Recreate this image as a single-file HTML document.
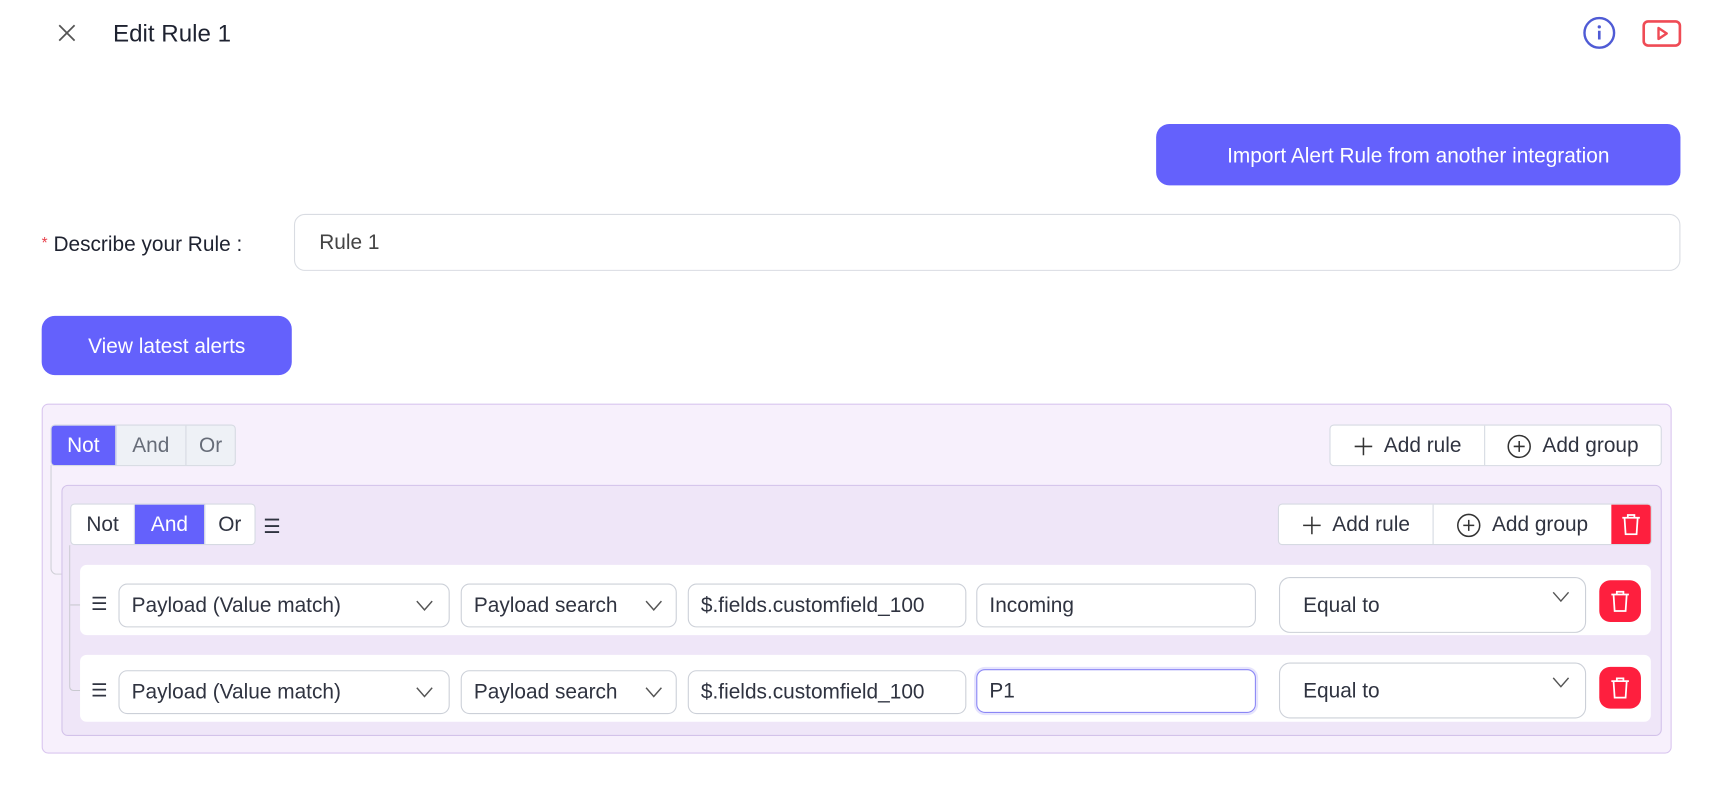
<!DOCTYPE html>
<html><head><meta charset="utf-8"><style>
html,body{margin:0;padding:0;background:#fff;width:1720px;height:786px;overflow:hidden}
#w{position:absolute;left:0;top:0;width:1568px;height:717px;transform:scale(1.0969);transform-origin:0 0;font-family:"Liberation Sans",sans-serif;color:#2f3340}
.a{position:absolute;box-sizing:border-box}
.btn{background:#6461fc;color:#fff;border-radius:12px;display:flex;align-items:center;justify-content:center;font-size:19px;padding-top:3px}
.seg{display:flex;border:1px solid #d6dae2;border-radius:4px;overflow:hidden;font-size:19px}
.seg div{display:flex;align-items:center;justify-content:center;border-right:1px solid #d6dae2;padding-top:2px}
.seg div:last-child{border-right:none}
.on{background:#6461fc;color:#fff}
.box{border:1px solid #ccd0d8;border-radius:8px;background:#fff;display:flex;align-items:center;font-size:19px;padding-left:11px;padding-top:2px}
.row{background:#fff;border-radius:6px}
.del{background:#fe1f3e;display:flex;align-items:center;justify-content:center}
.ch{position:absolute;right:14px;top:50%;margin-top:-5px}
.ic{margin-right:10px}
</style></head><body><div id="w">
<svg class="a" style="left:52px;top:21px" width="18" height="18" viewBox="0 0 18 18"><path d="M2 2L16 16M16 2L2 16" stroke="#555" stroke-width="1.6"/></svg>
<div class="a" style="left:103px;top:18px;font-size:22px;font-weight:500;color:#1e2230">Edit Rule 1</div>
<svg class="a" style="left:1443px;top:15px" width="30" height="30" viewBox="0 0 30 30"><circle cx="15" cy="15" r="13.5" fill="none" stroke="#4f5bd5" stroke-width="2.2"/><circle cx="15" cy="9.5" r="1.5" fill="#4f5bd5"/><path d="M15 13v8" stroke="#4f5bd5" stroke-width="2.4"/></svg>
<svg class="a" style="left:1497px;top:18px" width="36" height="26" viewBox="0 0 36 26"><rect x="1.5" y="1.5" width="33" height="22" rx="4" fill="none" stroke="#ef4b55" stroke-width="2.4"/><path d="M15 7.5v10l7.5-5z" fill="none" stroke="#ef4b55" stroke-width="2.2" stroke-linejoin="round"/></svg>
<div class="a btn" style="left:1054px;top:113px;width:478px;height:56px">Import Alert Rule from another integration</div>
<div class="a" style="left:38px;top:213px;font-size:19px;color:#1e2230"><span style="color:#e8434e;font-size:14px;vertical-align:top">*</span> Describe your Rule :</div>
<div class="a box" style="left:268px;top:195px;width:1264px;height:52px;padding-left:22px;border-color:#d9dce2;border-radius:10px;color:#444">Rule 1</div>
<div class="a btn" style="left:38px;top:288px;width:228px;height:54px">View latest alerts</div>
<div class="a" style="left:38px;top:368px;width:1486px;height:319px;background:#f7f0fc;border:1px solid #d9c6ef;border-radius:6px"></div>
<div class="a" style="left:46px;top:424px;width:12px;height:100px;border-left:1.5px solid #cfcfd6;border-bottom:1.5px solid #cfcfd6;border-bottom-left-radius:6px"></div>
<div class="a seg" style="left:46px;top:387px;width:169px;height:38px;background:#eef1f6;color:#666c78"><div class="on" style="width:58px">Not</div><div style="width:63px">And</div><div style="flex:1">Or</div></div>
<div class="a seg" style="left:1212px;top:387px;width:303px;height:38px;background:#fff"><div style="width:140px"><svg class="ic" width="18" height="18" viewBox="0 0 18 18"><path d="M9 1v16M1 9h16" stroke="#333" stroke-width="1.4"/></svg>Add rule</div><div style="flex:1"><svg class="ic" width="22" height="22" viewBox="0 0 22 22"><circle cx="11" cy="11" r="10" fill="none" stroke="#333" stroke-width="1.4"/><path d="M11 6v10M6 11h10" stroke="#333" stroke-width="1.4"/></svg>Add group</div></div>
<div class="a" style="left:56px;top:442px;width:1459px;height:229px;background:#efe6f8;border:1px solid #d3c2ea;border-radius:6px"></div>
<div class="a" style="left:63px;top:497px;width:10px;height:133px;border-left:1.5px solid #c9c9d0;border-bottom:1.5px solid #c9c9d0;border-bottom-left-radius:4px"></div>
<div class="a" style="left:64px;top:551px;width:9px;border-top:1.5px solid #c9c9d0"></div>
<div class="a seg" style="left:64px;top:459px;width:169px;height:38px;background:#fff"><div style="width:57px">Not</div><div class="on" style="width:63px">And</div><div style="flex:1">Or</div></div>
<div class="a" style="left:240px;top:470px;font-size:18px">☰</div>
<div class="a seg" style="left:1165px;top:459px;width:341px;height:38px;background:#fff"><div style="width:140px"><svg class="ic" width="18" height="18" viewBox="0 0 18 18"><path d="M9 1v16M1 9h16" stroke="#333" stroke-width="1.4"/></svg>Add rule</div><div style="width:162px;border-right:none"><svg class="ic" width="22" height="22" viewBox="0 0 22 22"><circle cx="11" cy="11" r="10" fill="none" stroke="#333" stroke-width="1.4"/><path d="M11 6v10M6 11h10" stroke="#333" stroke-width="1.4"/></svg>Add group</div><div class="del" style="flex:1;padding:0"><svg width="18" height="20" viewBox="0 0 18 20"><path d="M1 4h16M6 4V1.5h6V4M3 4l1 15h10l1-15" fill="none" stroke="#fff" stroke-width="1.6"/></svg></div></div>

<div class="a row" style="left:73px;top:515px;width:1432px;height:64px"></div>
<div class="a row" style="left:73px;top:597px;width:1432px;height:61px"></div>

<div class="a" style="left:83px;top:541px;font-size:17px">☰</div>
<div class="a box" style="left:108px;top:532px;width:302px;height:40px">Payload (Value match)<svg class="ch" width="16" height="10" viewBox="0 0 16 10"><path d="M1 1l7 8 7-8" fill="none" stroke="#555" stroke-width="1.3"/></svg></div>
<div class="a box" style="left:420px;top:532px;width:197px;height:40px">Payload search<svg class="ch" style="right:12px" width="16" height="10" viewBox="0 0 16 10"><path d="M1 1l7 8 7-8" fill="none" stroke="#555" stroke-width="1.3"/></svg></div>
<div class="a box" style="left:627px;top:532px;width:254px;height:40px">$.fields.customfield_100</div>
<div class="a box" style="left:890px;top:532px;width:255px;height:40px">Incoming</div>
<div class="a box" style="left:1166px;top:526px;width:280px;height:51px;padding-left:21px;border-radius:10px">Equal to<svg class="ch" style="top:12px;margin:0" width="16" height="10" viewBox="0 0 16 10"><path d="M1 1l7 8 7-8" fill="none" stroke="#555" stroke-width="1.3"/></svg></div>
<div class="a del" style="left:1458px;top:529px;width:38px;height:38px;border-radius:10px"><svg width="18" height="20" viewBox="0 0 18 20"><path d="M1 4h16M6 4V1.5h6V4M3 4l1 15h10l1-15" fill="none" stroke="#fff" stroke-width="1.6"/></svg></div>

<div class="a" style="left:83px;top:620px;font-size:17px">☰</div>
<div class="a box" style="left:108px;top:611px;width:302px;height:40px">Payload (Value match)<svg class="ch" width="16" height="10" viewBox="0 0 16 10"><path d="M1 1l7 8 7-8" fill="none" stroke="#555" stroke-width="1.3"/></svg></div>
<div class="a box" style="left:420px;top:611px;width:197px;height:40px">Payload search<svg class="ch" style="right:12px" width="16" height="10" viewBox="0 0 16 10"><path d="M1 1l7 8 7-8" fill="none" stroke="#555" stroke-width="1.3"/></svg></div>
<div class="a box" style="left:627px;top:611px;width:254px;height:40px">$.fields.customfield_100</div>
<div class="a box" style="left:890px;top:610px;width:255px;height:40px;border:1.5px solid #8b87f5;box-shadow:0 0 0 2px #e6e4fd">P1</div>
<div class="a box" style="left:1166px;top:604px;width:280px;height:51px;padding-left:21px;border-radius:10px">Equal to<svg class="ch" style="top:12px;margin:0" width="16" height="10" viewBox="0 0 16 10"><path d="M1 1l7 8 7-8" fill="none" stroke="#555" stroke-width="1.3"/></svg></div>
<div class="a del" style="left:1458px;top:608px;width:38px;height:38px;border-radius:10px"><svg width="18" height="20" viewBox="0 0 18 20"><path d="M1 4h16M6 4V1.5h6V4M3 4l1 15h10l1-15" fill="none" stroke="#fff" stroke-width="1.6"/></svg></div>
</div></body></html>
